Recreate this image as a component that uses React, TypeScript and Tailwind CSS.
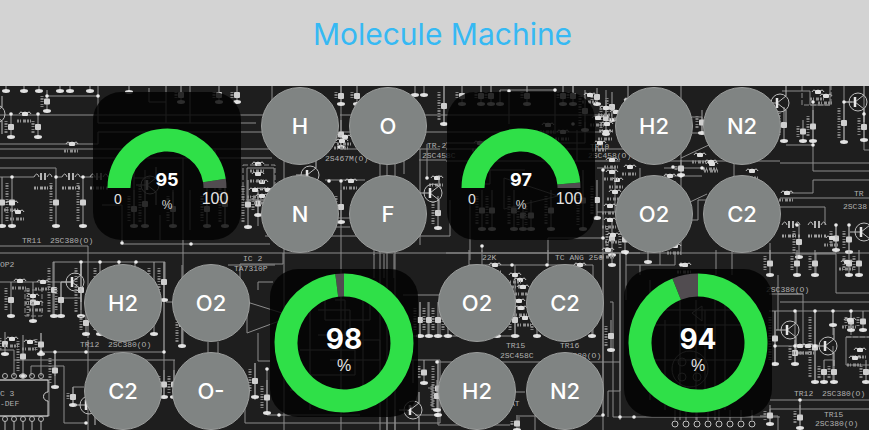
import React from "react";

type Point = [number, number];

const wires = [
  // upper left
  "M47 96H98M98 86V123H256M0 115H272M0 144H98V132H272M0 149H272M0 158H272M0 168H56V177M0 177H34M56 177H62M80 177H100",
  "M0 246H88V338M0 253H869M183 158V345M122 205V244H270M102 205H122M166 86V123M190 86V123M149 88V102H166",
  "M247 168H274M274 168V200H247V168M258 200V226M284 150V430M272 86V115",
  // upper middle
  "M341 86V132M341 180V430M325 180H365M341 149H440M420 149V245M380 160V430M387 160V430M395 160V430M404 160V174",
  "M265 236H450V200M427 144V178M444 86V124M340 115H446M340 132H446M419 160H446M374 180V255M282 227H350M282 218H350",
  // second gauge and to its right
  "M446 115H606V90M446 132H606M446 149H640M446 161H620M446 143H585V122M509 90V124M555 90V134M577 130V161",
  "M482 246V253M548 260V238H603M603 168V430M597 168H615V212H597M470 200V260M446 253H640M573 86V97M500 90H555",
  "M504 178V209L558 196L504 178M470 184H490V170H525",
  // between the molecules on the right
  "M692 117H702V133H692M681 86V255M664 168H702M664 176H702M664 161H780M734 160V180M640 168V180",
  "M681 158L711 144M690 202L707 194M692 220H698V200H720M626 250V300M620 253V420M716 250V275M660 250V265M732 250V275",
  // upper right
  "M782 91H810V105H830V86M786 145H813M813 100V171H869M813 188V193H790M813 188V180H869M780 163H869M780 198H869",
  "M780 207H825V225M844 86V142M864 95V150H869M844 102H852M836 225V253H816V275M849 225V250M770 243V260",
  // lower left
  "M53 262H165V285M0 282H74M0 350H14M14 350V376M14 360H175M31 376V366H64V423H85M53 262V318M61 282V318M81 262V310M61 298H81",
  "M41 333V376M41 352H164V262M55 352V376M88 340V430M73 387H84M73 387V405M164 285V398M174 360V400M0 380H49V416H0",
  "M182 265V346M173 302H166M208 342V360M218 342V360M245 423H440V360M245 423V400M240 278V264H283V253M247 302V333",
  "M247 302L282 313M247 333L282 320M258 333V361H270M258 290V282H273M255 363V400M267 369V415H360M228 265H275",
  // lower middle
  "M374 254V278M384 254V278M394 254V278M403 295H440M420 302V336M428 302V336M440 302V336M410 336H520M410 360H440",
  "M387 410V430M395 410V430M428 388H440M413 360V383M415 415H440M438 360V425H510M437 362H620",
  "M469 250V265H593V335M482 250V265M548 250V265M515 265V336M603 253V416H520M620 253V391H608V417M613 417H780",
  "M610 302H613V417M519 415V430M535 415V430M515 392H525M640 265V275M626 265H675V253",
  // lower right
  "M778 275V330M803 294V346M795 254H836V293H869M780 302H869M769 294H803M769 311H869M775 311V363M795 311V363",
  "M815 311V382M833 311V335M851 311V335M775 346H815M833 346V382M824 360H833M846 337H869M846 337V365M770 400H869",
  "M770 409H869M800 400V425M770 409V424M760 416H778V430M846 365H869M778 294H803",
];

const ghostWires = [
  "M310 283V410M325 278V320H370V283H325M318 310H350V335H318M300 350H355V375H300M290 390H390M363 278V410M335 300H345V340H380V360H330",
  "M680 280V420M696 300V420M715 300V420M640 310H750M640 325H750M665 320V410M725 290V410M650 280V400M640 360H760M705 310V410",
  "M160 215V240M134 170V225M145 170V225M173 192V226M207 180V226M225 180V226M134 178H150M190 190V230M215 150V190",
];

// winding bumps drawn in line with a wire
const coils: Point[] = [[34, 177], [62, 177], [782, 225], [808, 225], [90, 177]];

const stubs: [number, number, number][] = [
  [6, 86, 91], [24, 86, 91], [39, 86, 91], [60, 86, 91], [70, 86, 91], [90, 86, 91], [11, 115, 137], [38, 115, 137], [47, 90, 111],
  [12, 177, 226], [2, 177, 226], [56, 177, 226], [83, 177, 226], [134, 190, 226], [145, 180, 226], [173, 190, 226],
  [207, 190, 226], [225, 180, 226], [129, 86, 92], [181, 86, 102], [219, 86, 102], [237, 86, 102], [248, 180, 227],
  [258, 190, 215], [341, 86, 104], [341, 120, 147], [357, 86, 104], [341, 190, 222], [415, 86, 95], [424, 86, 95], [444, 86, 124],
  [438, 196, 228], [462, 86, 104], [481, 86, 104], [491, 86, 104], [500, 90, 104], [527, 86, 104], [563, 86, 104], [573, 86, 104],
  [585, 90, 130], [597, 88, 104], [606, 100, 134], [482, 190, 229], [492, 190, 229], [514, 190, 229], [523, 200, 229],
  [531, 200, 229], [551, 190, 229], [583, 170, 229], [597, 180, 218], [612, 220, 255], [784, 107, 141], [803, 120, 141],
  [813, 110, 141], [844, 102, 142], [864, 112, 140], [799, 225, 257], [836, 225, 250], [849, 225, 252],
  [11, 282, 316], [33, 282, 321], [54, 262, 316], [61, 282, 316], [81, 262, 316], [5, 332, 354], [23, 335, 376],
  [41, 333, 354], [55, 352, 387], [73, 387, 405], [182, 300, 346], [164, 262, 300], [164, 370, 397], [174, 370, 397],
  [86, 310, 334], [100, 262, 334], [154, 262, 334], [119, 262, 270], [135, 262, 270], [255, 363, 397], [267, 380, 413],
  [420, 302, 336], [429, 302, 336], [438, 302, 336], [448, 302, 336], [497, 310, 336], [515, 302, 336], [537, 302, 336], [592, 302, 336],
  [424, 360, 383], [438, 360, 415], [437, 380, 410], [612, 253, 265], [611, 320, 350], [770, 250, 275], [797, 250, 275],
  [815, 250, 275], [849, 250, 275], [859, 250, 275], [775, 311, 364], [795, 340, 364], [815, 311, 382], [824, 360, 382],
  [834, 360, 382], [866, 360, 382], [833, 311, 325], [851, 311, 330], [863, 311, 330], [800, 405, 428], [770, 405, 424], [517, 415, 430],
  [628, 86, 100], [612, 92, 120], [625, 225, 252], [648, 250, 262], [681, 160, 175], [702, 110, 133],
];

const transistors: Point[] = [
  [-4, 114], [75, 282], [433, 193], [780, 103], [858, 102], [864, 232], [790, 330], [828, 346], [413, 410], [150, 185], [89, 405], [310, 175],
];

const dots: Point[] = [
  [47, 96], [98, 96], [11, 114], [38, 114], [12, 177], [56, 177], [83, 177], [122, 243], [191, 244], [427, 178], [341, 181], [329, 181],
  [509, 91], [555, 90], [573, 124], [603, 238], [603, 170], [482, 246], [813, 102], [813, 145], [844, 102], [864, 114], [797, 225],
  [836, 225], [849, 225], [81, 262], [100, 262], [119, 262], [136, 262], [41, 352], [55, 352], [86, 352], [86, 423], [164, 352], [267, 369],
  [279, 415], [603, 415], [620, 417], [634, 417], [681, 265], [626, 253], [795, 311], [815, 311], [833, 311], [851, 311], [795, 346], [815, 346],
  [775, 346], [800, 400], [547, 265], [512, 265], [437, 362], [437, 415], [673, 167], [681, 176], [702, 168],
];

const parts: Point[] = [
  [25, 114], [72, 144], [20, 281], [43, 282], [258, 164], [262, 182], [268, 190], [255, 190], [351, 181], [437, 178],
  [480, 143], [548, 125], [563, 132], [607, 124], [520, 280], [523, 287], [519, 301], [521, 308], [495, 265], [580, 265], [630, 167],
  [787, 193], [847, 262], [800, 346], [808, 346], [826, 96], [818, 92], [675, 246], [685, 265], [670, 176], [752, 171], [712, 164],
  [850, 320], [860, 350], [855, 358], [12, 203], [18, 212], [33, 296], [37, 303], [610, 220], [613, 235], [617, 180], [615, 192],
  [610, 206], [30, 342], [12, 339], [606, 132], [590, 95], [700, 155], [711, 162], [600, 143], [612, 160], [608, 250], [345, 137],
  [342, 141], [258, 174], [262, 196], [616, 112], [630, 100], [525, 318], [515, 275], [612, 172], [606, 108], [598, 118], [832, 238],
];

const labels: { x: number; y: number; t: string }[] = [
  { x: 22, y: 243, t: "TR11" }, { x: 50, y: 243, t: "2SC380(O)" },
  { x: 80, y: 347, t: "TR12" }, { x: 108, y: 347, t: "2SC380(O)" },
  { x: 325, y: 161, t: "2S467M(O)" }, { x: 427, y: 148, t: "TR-2" }, { x: 422, y: 158, t: "2SC458C" },
  { x: 590, y: 149, t: "TR10" }, { x: 588, y: 158, t: "2SC458(O)" },
  { x: 506, y: 348, t: "TR15" }, { x: 500, y: 358, t: "2SC458C" }, { x: 560, y: 348, t: "TR16" }, { x: 558, y: 358, t: "2SC380(O)" },
  { x: 854, y: 196, t: "TR" }, { x: 843, y: 209, t: "2SC38" },
  { x: 766, y: 292, t: "2SC380(O)" }, { x: 794, y: 396, t: "TR12" }, { x: 822, y: 396, t: "2SC380(O)" },
  { x: 824, y: 417, t: "TR15" }, { x: 815, y: 426, t: "2SC380(O)" },
  { x: 0, y: 267, t: "OP2" }, { x: 0, y: 396, t: "C 3" }, { x: 0, y: 406, t: "-DEF" },
  { x: 234, y: 271, t: "TA7310P" }, { x: 243, y: 261, t: "IC 2" },
  { x: 482, y: 260, t: "22K" }, { x: 555, y: 260, t: "TC ANG 250" }, { x: 510, y: 406, t: "AT" },
];

function Schematic() {
  return (
    <svg
      aria-hidden="true"
      className="absolute inset-0 h-full w-full"
      viewBox="0 86 869 344"
      preserveAspectRatio="xMidYMid slice"
      fill="none"
      stroke="#8c8c8c"
    >
      {wires.map((d) => (
        <path key={d} d={d} strokeWidth="1" />
      ))}
      {ghostWires.map((d) => (
        <path key={d} d={d} strokeWidth="1" />
      ))}
      {stubs.map(([x, top, bottom], i) => (
        <g key={i}>
          <path d={`M${x} ${top}V${bottom}`} stroke="#a0a0a0" />
          <ellipse cx={x} cy={bottom} rx="4" ry="1.9" fill="#e2e2e2" stroke="none" />
          {bottom - top > 14 && (
            <>
              <rect x={x - 3} y={(top + bottom) / 2 - 2} width="6" height="6" rx="1" fill="#cfcfcf" stroke="none" />
              <path d={`M${x - 5} ${top + 6}V${bottom - 4}`} strokeWidth="3" strokeDasharray="1 1 2 1 1 2" stroke="#808080" />
            </>
          )}
        </g>
      ))}
      {parts.map(([x, y], i) => (
        <g key={i}>
          <path d={`M${x - 6} ${y}q2 -4 4 0q2 -4 4 0q2 -4 4 0`} stroke="#c4c4c4" />
          <rect x={x - 3} y={y - 2} width="6" height="4" rx="1" fill="#dedede" stroke="none" />
          <path d={`M${x - 8} ${y + 7}h16`} strokeWidth="3" strokeDasharray="2 1 1 2 3 1" stroke="#8e8e8e" />
        </g>
      ))}
      {coils.map(([x, y]) => (
        <g key={`${x}-${y}`}>
          <path d={`M${x} ${y}q3 -6 5 0M${x + 13} ${y}q3 -6 5 0`} stroke="#b4b4b4" />
          <path d={`M${x + 7} ${y - 4}V${y + 3}M${x + 11} ${y - 4}V${y + 3}`} strokeWidth="2" stroke="#b4b4b4" />
          <path d={`M${x} ${y + 11}h18`} strokeWidth="3" strokeDasharray="2 1 1 2 3 1" stroke="#a0a0a0" />
        </g>
      ))}
      {transistors.map(([x, y], i) => (
        <g key={i} stroke="#bcbcbc">
          <circle cx={x} cy={y} r="9" />
          <path d={`M${x - 14} ${y}H${x - 4}M${x - 3} ${y}L${x + 6} ${y - 7}V${y - 18}M${x - 3} ${y}L${x + 6} ${y + 7}V${y + 20}`} />
          <path d={`M${x - 3} ${y - 5}V${y + 5}`} strokeWidth="2.5" stroke="#e6e6e6" />
        </g>
      ))}
      {[5, 14, 23, 32, 41].map((x) => (
        <g key={x} stroke="#b5b5b5">
          <circle cx={x} cy="376" r="2.5" />
          <circle cx={x} cy="419" r="2.5" />
          <path d={`M${x} 421V430`} />
        </g>
      ))}
      <path d="M0 380H48V392a4 4 0 0 0 0 9V416H0" stroke="#d0d0d0" />
      <path d="M25 290H42V316H25ZM243 165H275V200H243ZM846 337H869M802 86V105H831V86" strokeDasharray="5 2" />
      <circle cx="690" cy="369" r="18" />
      {[[682, 362], [697, 362], [682, 377], [697, 377]].map(([x, y]) => (
        <circle key={`${x}-${y}`} cx={x} cy={y} r="4" />
      ))}
      <path d="M692 313L702 306V321Z" />
      {[675, 686, 697, 708, 719, 730, 741, 752].map((x) => (
        <g key={x}>
          <circle cx={x} cy="424" r="3" stroke="#c0c0c0" />
          <path d={`M${x} 420V410`} />
        </g>
      ))}
      {dots.map(([x, y], i) => (
        <circle key={i} cx={x} cy={y} r="1.8" fill="#ececec" stroke="none" />
      ))}
      <g
        className="font-['Liberation_Mono',monospace] text-[8px]"
        fill="#b0b0b0"
        stroke="none"
      >
        {labels.map(({ x, y, t }) => (
          <text key={`${x}-${y}`} x={x} y={y}>
            {t}
          </text>
        ))}
      </g>
    </svg>
  );
}

function Molecules({ names }: { names: string[] }) {
  return (
    <div className="grid grid-cols-2 gap-[10px]">
      {names.map((name) => (
        <button
          key={name}
          type="button"
          className="size-[78px] rounded-full border border-[#9b9d9c] bg-[#808483] text-[22px] font-medium text-white"
        >
          {name}
        </button>
      ))}
    </div>
  );
}

function arc(cx: number, cy: number, r: number, from: number, to: number) {
  const at = (deg: number) => {
    const a = (deg * Math.PI) / 180;
    return `${cx + r * Math.cos(a)} ${cy + r * Math.sin(a)}`;
  };
  return `M${at(from)}A${r} ${r} 0 ${to - from > 180 ? 1 : 0} 1 ${at(to)}`;
}

function Gauge({ value, half = false }: { value: number; half?: boolean }) {
  const start = half ? 180 : -90;
  const sweep = half ? 180 : 360;
  const cy = half ? 96 : 74;
  const r = half ? 48 : 58;
  const split = start + (sweep * value) / 100;
  return (
    <div className="flex w-[166px] justify-center pt-[5px]">
      <div className="size-[148px] rounded-[28px] bg-black/80">
        <svg viewBox="0 0 148 148" role="img" aria-label={`${value} %`} className="size-full" fill="none">
          <path d={arc(74, cy, r, split, start + sweep)} stroke="#514c50" strokeWidth="23" />
          <path d={arc(74, cy, r, start, split)} stroke="#2fe048" strokeWidth="23" />
          <g fill="#fff" textAnchor="middle">
            {half ? (
              <>
                <text x="74" y="94" className="text-lg font-bold">{value}</text>
                <text x="74" y="117" fill="#d0d0d0" className="font-['Liberation_Sans',sans-serif] text-xs">%</text>
                <text x="25" y="112" fill="#e4e4e4" className="font-['Liberation_Sans',sans-serif] text-sm">0</text>
                <text x="122" y="112" fill="#e4e4e4" className="font-['Liberation_Sans',sans-serif] text-base">100</text>
              </>
            ) : (
              <>
                <text x="74" y="80" className="text-[28px] font-bold">{value}</text>
                <text x="74" y="102" fill="#e4e4e4" className="font-['Liberation_Sans',sans-serif] text-base">%</text>
              </>
            )}
          </g>
        </svg>
      </div>
    </div>
  );
}

export default function App() {
  return (
    <div className="bg-white pr-[3px] font-[Inter,sans-serif]">
      <header className="flex h-[86px] justify-center bg-[#d3d3d3] pt-3 pl-4">
        <h1 className="text-[30px] leading-11 text-[#36b9f3]">Molecule Machine</h1>
      </header>
      <main className="relative overflow-hidden bg-[#1e1e1e]">
        <Schematic />
        <div className="relative flex justify-center pt-px pr-1">
          <div className="grid grid-cols-4 gap-[11px]">
            <Gauge value={95} half />
            <Molecules names={["H", "O", "N", "F"]} />
            <Gauge value={97} half />
            <Molecules names={["H2", "N2", "O2", "C2"]} />
            <Molecules names={["H2", "O2", "C2", "O-"]} />
            <Gauge value={98} />
            <Molecules names={["O2", "C2", "H2", "N2"]} />
            <Gauge value={94} />
          </div>
        </div>
      </main>
    </div>
  );
}
